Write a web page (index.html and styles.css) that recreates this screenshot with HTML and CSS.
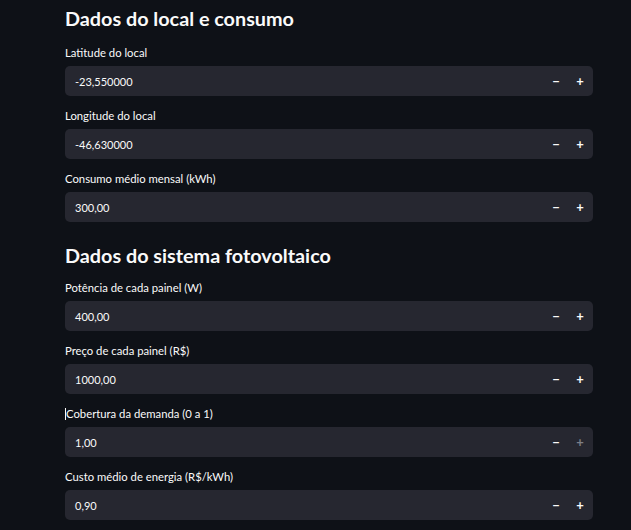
FILE: index.html
```html
<!DOCTYPE html>
<html lang="pt">
<head>
<meta charset="utf-8">
<link rel="stylesheet" href="styles.css">
</head>
<body>
<main class="main">
  <h2 class="heading first">Dados do local e consumo</h2>
  <div class="field">
    <label class="label">Latitude do local</label>
    <div class="input"><span class="value">-23,550000</span><span class="step">−</span><span class="step">+</span></div>
  </div>
  <div class="field">
    <label class="label">Longitude do local</label>
    <div class="input"><span class="value">-46,630000</span><span class="step">−</span><span class="step">+</span></div>
  </div>
  <div class="field">
    <label class="label">Consumo médio mensal (kWh)</label>
    <div class="input"><span class="value">300,00</span><span class="step">−</span><span class="step">+</span></div>
  </div>
  <h2 class="heading">Dados do sistema fotovoltaico</h2>
  <div class="field">
    <label class="label">Potência de cada painel (W)</label>
    <div class="input"><span class="value">400,00</span><span class="step">−</span><span class="step">+</span></div>
  </div>
  <div class="field">
    <label class="label">Preço de cada painel (R$)</label>
    <div class="input"><span class="value">1000,00</span><span class="step">−</span><span class="step">+</span></div>
  </div>
  <div class="field">
    <label class="label"><span class="caret"></span>Cobertura da demanda (0 a 1)</label>
    <div class="input"><span class="value">1,00</span><span class="step">−</span><span class="step dim">+</span></div>
  </div>
  <div class="field">
    <label class="label">Custo médio de energia (R$/kWh)</label>
    <div class="input"><span class="value">0,90</span><span class="step">−</span><span class="step">+</span></div>
  </div>
</main>
</body>
</html>
```
FILE: styles.css
```css
html, body {
  margin: 0;
  padding: 0;
  background: #0e1117;
  height: 530px;
  overflow: hidden;
}
body {
  font-family: "Lato", "Noto Sans", sans-serif;
  color: #fafafa;
}
.main {
  width: 528px;
  padding-left: 65px;
  display: flex;
  flex-direction: column;
}
.heading {
  margin: 0;
  font-size: 19.8px;
  font-weight: 700;
  line-height: 26px;
  padding-top: 7px;
  padding-bottom: 13px;
}
.heading.first {
  padding-top: 5px;
  padding-bottom: 15px;
}
.field {
  display: flex;
  flex-direction: column;
  margin-bottom: 13px;
}
.label {
  font-size: 11.3px;
  line-height: 14px;
  height: 14px;
  margin-bottom: 6px;
  color: #fafafa;
  display: flex;
  align-items: center;
}
.caret {
  display: inline-block;
  width: 1px;
  height: 12px;
  background: #fafafa;
}
.input {
  height: 30px;
  background: #262730;
  border-radius: 5px;
  display: flex;
  align-items: center;
  padding-left: 10px;
  padding-right: 1px;
  box-sizing: border-box;
}
.value {
  flex: 1;
  font-size: 11px;
}
.step {
  width: 24px;
  text-align: center;
  font-weight: 700;
  font-size: 13px;
  color: #fafafa;
}
.step.dim {
  color: #7d7f87;
}
```
